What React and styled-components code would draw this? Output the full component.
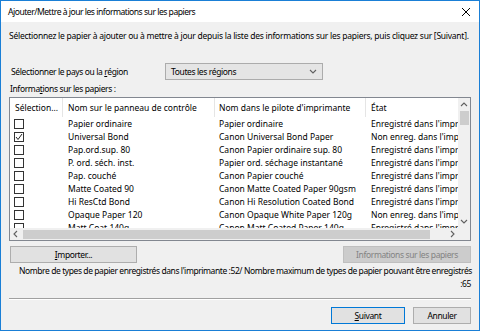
import React from 'react';
import styled, { createGlobalStyle } from 'styled-components';

const GlobalStyle = createGlobalStyle`
  html, body {
    margin: 0;
    padding: 0;
    background: #ffffff;
  }
  body {
    font-family: "Noto Sans", "Open Sans", sans-serif;
    font-size: 8.5px;
    letter-spacing: -0.38px;
    color: #000;
  }
`;

const Window = styled.div`
  width: 480px;
  height: 331px;
  box-sizing: border-box;
  border: 1px solid #1a7fd6;
  background: #f0f0f0;
  display: flex;
  flex-direction: column;
`;

const TitleBar = styled.div`
  height: 21px;
  background: #ffffff;
  display: flex;
  align-items: center;
  justify-content: space-between;
  padding: 0 8px 0 7px;
  font-size: 8.6px;
  letter-spacing: -0.5px;
`;

const CloseIcon = styled.svg`
  width: 10px;
  height: 10px;
`;

const Body = styled.div`
  flex: 1;
  padding: 0 8px;
  display: flex;
  flex-direction: column;
`;

const Intro = styled.div`
  margin-top: 8px;
  line-height: 12px;
  white-space: nowrap;
  letter-spacing: -0.25px;
`;

const RegionRow = styled.div`
  display: flex;
  align-items: center;
  margin-top: 21px;
  padding-left: 2px;
`;

const RegionLabel = styled.div`
  width: 154px;
`;

const Select = styled.div`
  width: 158px;
  height: 17px;
  box-sizing: border-box;
  border: 1px solid #acacac;
  background: #e5e5e5;
  display: flex;
  align-items: center;
  justify-content: space-between;
  padding: 0 5px;
`;

const SectionLabel = styled.div`
  margin-top: 3px;
  line-height: 12px;
  padding-left: 1px;
`;

const ListBox = styled.div`
  margin-top: 2px;
  height: 144px;
  box-sizing: border-box;
  border: 1px solid #828790;
  background: #ffffff;
  display: grid;
  grid-template-columns: 1fr 12px;
  grid-template-rows: 1fr 12px;
  letter-spacing: 0;
`;

const Viewport = styled.div`
  overflow: hidden;
`;

const HeaderRow = styled.div`
  display: grid;
  grid-template-columns: 53px 152px 151px 170px;
  height: 19px;
`;

const HeaderCell = styled.div`
  display: flex;
  align-items: center;
  padding-left: ${(p) => p.$pad || 5}px;
  border-right: 1px solid #e5e5e5;
  white-space: nowrap;
  overflow: hidden;
`;

const Row = styled.div`
  display: grid;
  grid-template-columns: 53px 152px 151px 170px;
  height: 13px;
`;

const Cell = styled.div`
  display: flex;
  align-items: center;
  padding-left: ${(p) => p.$pad || 5}px;
  white-space: nowrap;
  overflow: hidden;
`;

const Check = styled.div`
  width: 10px;
  height: 10px;
  box-sizing: border-box;
  border: 1px solid #333333;
  background: #ffffff;
  display: flex;
  align-items: center;
  justify-content: center;
`;

const VScroll = styled.div`
  background: #f0f0f0;
  display: flex;
  flex-direction: column;
  align-items: center;
`;

const HScroll = styled.div`
  background: #f0f0f0;
  display: flex;
  align-items: center;
`;

const Arrow = styled.div`
  width: 12px;
  height: 13px;
  display: flex;
  align-items: center;
  justify-content: center;
  flex-shrink: 0;
`;

const VThumb = styled.div`
  width: 9px;
  height: 14px;
  background: #cdcdcd;
`;

const VTrack = styled.div`
  flex: 1;
`;

const HThumb = styled.div`
  height: 9px;
  width: 407px;
  margin-left: 1px;
  background: #cdcdcd;
`;

const HTrack = styled.div`
  flex: 1;
`;

const Corner = styled.div`
  background: #f0f0f0;
`;

const ButtonRow = styled.div`
  display: flex;
  justify-content: space-between;
  margin-top: 5px;
  padding-left: 1px;
`;

const Button = styled.div`
  width: ${(p) => p.$w}px;
  height: 17px;
  box-sizing: border-box;
  display: flex;
  align-items: center;
  justify-content: center;
  background: ${(p) => (p.$disabled ? '#cccccc' : '#e1e1e1')};
  border: 1px solid ${(p) => (p.$primary ? '#0078d7' : p.$disabled ? '#bfbfbf' : '#adadad')};
  color: ${(p) => (p.$disabled ? '#838383' : '#000')};
  white-space: nowrap;
`;

const CountText = styled.div`
  margin-top: 1px;
  padding-left: 10px;
  line-height: 13px;
  letter-spacing: -0.42px;
`;

const CountLine = styled.div`
  white-space: nowrap;
  text-align: ${(p) => (p.$right ? 'right' : 'left')};
`;

const Separator = styled.div`
  margin-top: auto;
  border-top: 1px solid #a0a0a0;
  border-bottom: 1px solid #ffffff;
`;

const Footer = styled.div`
  display: flex;
  justify-content: flex-end;
  gap: 8px;
  padding: 7px 0 6px;
`;

const Chevron = ({ dir, color = '#606060' }) => {
  const pts = {
    down: '1,2 4,5 7,2',
    up: '1,5 4,2 7,5',
    left: '5,1 2,4 5,7',
    right: '3,1 6,4 3,7',
  }[dir];
  return (
    <svg width="8" height="8" viewBox="0 0 8 8">
      <polyline points={pts} fill="none" stroke={color} strokeWidth="1.1" />
    </svg>
  );
};

const rows = [
  { checked: false, panel: 'Papier ordinaire', driver: 'Papier ordinaire', state: "Enregistré dans l'imprimante" },
  { checked: true, panel: 'Universal Bond', driver: 'Canon Universal Bond Paper', state: "Non enreg. dans l'impr." },
  { checked: false, panel: 'Pap.ord.sup. 80', driver: 'Canon Papier ordinaire sup. 80', state: "Enregistré dans l'imprimante" },
  { checked: false, panel: 'P. ord. séch. inst.', driver: 'Papier ord. séchage instantané', state: "Enregistré dans l'imprimante" },
  { checked: false, panel: 'Pap. couché', driver: 'Canon Papier couché', state: "Enregistré dans l'imprimante" },
  { checked: false, panel: 'Matte Coated 90', driver: 'Canon Matte Coated Paper 90gsm', state: "Enregistré dans l'imprimante" },
  { checked: false, panel: 'Hi ResCtd Bond', driver: 'Canon Hi Resolution Coated Bond', state: "Enregistré dans l'imprimante" },
  { checked: false, panel: 'Opaque Paper 120', driver: 'Canon Opaque White Paper 120g', state: "Non enreg. dans l'impr." },
  { checked: false, panel: 'Matt Coat 140g', driver: 'Canon Matt Coated Paper 140g', state: "Enregistré dans l'imprimante" },
];

const App = () => {
  return (
    <>
      <GlobalStyle />
      <Window>
        <TitleBar>
          <span>Ajouter/Mettre à jour les informations sur les papiers</span>
          <CloseIcon viewBox="0 0 10 10">
            <path d="M1 1 L9 9 M9 1 L1 9" stroke="#000" strokeWidth="1" />
          </CloseIcon>
        </TitleBar>
        <Body>
          <Intro>
            Sélectionnez le papier à ajouter ou à mettre à jour depuis la liste des informations sur les papiers, puis cliquez sur [Suivant].
          </Intro>
          <RegionRow>
            <RegionLabel>
              Sélectionner le pays ou la <u>r</u>égion
            </RegionLabel>
            <Select>
              <span>Toutes les régions</span>
              <Chevron dir="down" />
            </Select>
          </RegionRow>
          <SectionLabel>
            Informa<u>t</u>ions sur les papiers :
          </SectionLabel>
          <ListBox>
            <Viewport>
              <HeaderRow>
                <HeaderCell>Sélection...</HeaderCell>
                <HeaderCell>Nom sur le panneau de contrôle</HeaderCell>
                <HeaderCell $pad={4}>Nom dans le pilote d'imprimante</HeaderCell>
                <HeaderCell>État</HeaderCell>
              </HeaderRow>
              {rows.map((r, i) => (
                <Row key={i}>
                  <Cell $pad={4}>
                    <Check>
                      {r.checked && (
                        <svg width="8" height="8" viewBox="0 0 8 8">
                          <polyline points="1,4 3,6.5 7,1" fill="none" stroke="#222" strokeWidth="1" />
                        </svg>
                      )}
                    </Check>
                  </Cell>
                  <Cell>{r.panel}</Cell>
                  <Cell $pad={4}>{r.driver}</Cell>
                  <Cell>{r.state}</Cell>
                </Row>
              ))}
            </Viewport>
            <VScroll>
              <Arrow>
                <Chevron dir="up" />
              </Arrow>
              <VThumb />
              <VTrack />
              <Arrow>
                <Chevron dir="down" />
              </Arrow>
            </VScroll>
            <HScroll>
              <Arrow>
                <Chevron dir="left" />
              </Arrow>
              <HThumb />
              <HTrack />
              <Arrow>
                <Chevron dir="right" />
              </Arrow>
            </HScroll>
            <Corner />
          </ListBox>
          <ButtonRow>
            <Button $w={127}>
              <span>
                <u>I</u>mporter...
              </span>
            </Button>
            <Button $w={128} $disabled>
              Informations sur les papiers
            </Button>
          </ButtonRow>
          <CountText>
            <CountLine>
              Nombre de types de papier enregistrés dans l'imprimante :52/ Nombre maximum de types de papier pouvant être enregistrés
            </CountLine>
            <CountLine $right>:65</CountLine>
          </CountText>
          <Separator />
          <Footer>
            <Button $w={74} $primary>
              <span>
                <u>S</u>uivant
              </span>
            </Button>
            <Button $w={58}>Annuler</Button>
          </Footer>
        </Body>
      </Window>
    </>
  );
};

export default App;
